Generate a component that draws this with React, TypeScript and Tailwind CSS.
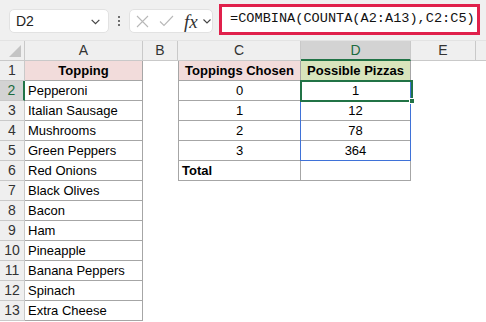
import React from "react";

type RowData = { a: string; c?: string; d?: string };

const rows: RowData[] = [
  { a: "Topping", c: "Toppings Chosen", d: "Possible Pizzas" },
  { a: "Pepperoni", c: "0", d: "1" },
  { a: "Italian Sausage", c: "1", d: "12" },
  { a: "Mushrooms", c: "2", d: "78" },
  { a: "Green Peppers", c: "3", d: "364" },
  { a: "Red Onions", c: "Total", d: "" },
  { a: "Black Olives" },
  { a: "Bacon" },
  { a: "Ham" },
  { a: "Pineapple" },
  { a: "Banana Peppers" },
  { a: "Spinach" },
  { a: "Extra Cheese" },
];

const Chevron = ({ size = 10 }: { size?: number }) => (
  <svg width={size} height={size} viewBox="0 0 10 10" fill="none">
    <path d="M1.5 3.5 L5 7 L8.5 3.5" stroke="#444" strokeWidth="1.1" />
  </svg>
);

const FormulaBar = () => (
  <div className="flex h-[40px] items-start bg-[#f0f0f0]">
    {/* name box */}
    <div className="ml-[9px] mt-[9px] flex h-[24px] w-[100px] items-center justify-between rounded-[5px] border border-[#e2e2e2] bg-white pl-[6px] pr-[7px]">
      <span className="text-[14px] text-[#222]">D2</span>
      <Chevron size={11} />
    </div>
    {/* dots */}
    <div className="ml-[9px] mt-[16px] flex flex-col gap-[2px]">
      <span className="h-[2px] w-[2px] rounded-full bg-[#444]" />
      <span className="h-[2px] w-[2px] rounded-full bg-[#444]" />
      <span className="h-[2px] w-[2px] rounded-full bg-[#444]" />
    </div>
    {/* cancel / enter / fx */}
    <div className="ml-[9px] mt-[9px] flex h-[24px] w-[84px] items-center rounded-[5px] border border-[#e2e2e2] bg-white pl-[6px]">
      <svg width="13" height="13" viewBox="0 0 13 13">
        <path d="M1 1 L12 12 M12 1 L1 12" stroke="#b8b8b8" strokeWidth="1.1" />
      </svg>
      <svg className="ml-[10px]" width="15" height="12" viewBox="0 0 15 12">
        <path d="M1 6.5 L5 10.5 L14 1" stroke="#b8b8b8" strokeWidth="1.1" fill="none" />
      </svg>
      <span className="ml-[10px] font-['Liberation_Serif',serif] text-[19px] italic leading-none text-[#333]">
        fx
      </span>
      <span className="ml-[4px]">
        <Chevron size={10} />
      </span>
    </div>
    {/* formula */}
    <div className="ml-[6px] mt-[4px] flex h-[31px] w-[261px] items-center border-[3px] border-[#e0204b] bg-white pl-[8px]">
      <span className="font-['Liberation_Mono',monospace] text-[13.6px] text-[#111]">
        =COMBINA(COUNTA(A2:A13),C2:C5)
      </span>
    </div>
  </div>
);

const ColumnHeaders = () => (
  <div className="flex h-[21px] border-t border-[#e3e3e3] bg-[#efefef] text-[14px] text-[#333]">
    <div className="relative w-[25px] shrink-0 border-r border-b border-[#c9c9c9]">
      <svg className="absolute bottom-[3px] right-[3px]" width="12" height="12" viewBox="0 0 12 12">
        <path d="M12 0 L12 12 L0 12 Z" fill="#c4c4c4" />
      </svg>
    </div>
    <div className="flex w-[118px] shrink-0 items-center justify-center border-r border-b border-[#c9c9c9]">A</div>
    <div className="flex w-[35px] shrink-0 items-center justify-center border-r border-b border-[#c9c9c9]">B</div>
    <div className="flex w-[123px] shrink-0 items-center justify-center border-r border-b border-[#c9c9c9]">C</div>
    <div className="flex w-[110px] shrink-0 items-center justify-center border-r border-b-2 border-r-[#c9c9c9] border-b-[#217346] bg-[#d3d3d3] text-[#1d6b40]">
      D
    </div>
    <div className="flex w-[65px] shrink-0 items-center justify-center border-r border-b border-[#c9c9c9]">E</div>
    <div className="flex-1 border-b border-[#c9c9c9]" />
  </div>
);

const Row = ({ n, row }: { n: number; row: RowData }) => {
  const head = n === 1;
  const inTable = n <= 6;
  const selected = n === 2;

  return (
    <div className="flex h-[20px] text-[13px] leading-[19px] text-black">
      <div
        className={
          selected
            ? "w-[25px] shrink-0 border-r-2 border-b border-r-[#217346] border-b-[#c9c9c9] bg-[#d3d3d3] text-center text-[14px] text-[#1d6b40]"
            : "w-[25px] shrink-0 border-r border-b border-[#c9c9c9] bg-[#efefef] text-center text-[14px] text-[#333]"
        }
      >
        {n}
      </div>
      <div
        className={
          head
            ? "w-[118px] shrink-0 border-r border-b border-[#a6a6a6] bg-[#f2dcdb] text-center font-bold"
            : "w-[118px] shrink-0 border-r border-b border-[#a6a6a6] px-[3px]"
        }
      >
        {row.a}
      </div>
      <div className="w-[35px] shrink-0" />
      {inTable ? (
        <>
          <div
            className={
              head
                ? "w-[123px] shrink-0 border-l border-r border-b border-[#a6a6a6] bg-[#f2dcdb] text-center font-bold"
                : row.c === "Total"
                  ? "w-[123px] shrink-0 border-l border-r border-b border-[#a6a6a6] px-[3px] font-bold"
                  : "w-[123px] shrink-0 border-l border-r border-b border-[#a6a6a6] text-center"
            }
          >
            {row.c}
          </div>
          <div
            className={
              head
                ? "w-[110px] shrink-0 border-r border-b border-[#a6a6a6] bg-[#d8e4bc] text-center font-bold"
                : "relative w-[110px] shrink-0 border-r border-b border-[#a6a6a6] text-center"
            }
          >
            {row.d}
            {selected && (
              <>
                <div className="absolute left-[-1px] top-[-1px] z-10 h-[81px] w-[111px] border border-[#3f72d8]" />
                <div className="absolute left-[-1px] top-[-1px] z-20 h-[22px] w-[113px] border-2 border-[#217346]">
                  <span className="absolute bottom-[-4px] right-[-4px] h-[6px] w-[6px] border border-white bg-[#217346]" />
                </div>
              </>
            )}
          </div>
        </>
      ) : (
        <>
          <div className="w-[123px] shrink-0" />
          <div className="w-[110px] shrink-0" />
        </>
      )}
      <div className="flex-1" />
    </div>
  );
};

export default function App() {
  return (
    <div className="h-[322px] w-[486px] overflow-hidden bg-white font-['Liberation_Sans',Arial,sans-serif]">
      <FormulaBar />
      <ColumnHeaders />
      {rows.map((row, i) => (
        <Row key={i} n={i + 1} row={row} />
      ))}
    </div>
  );
}
